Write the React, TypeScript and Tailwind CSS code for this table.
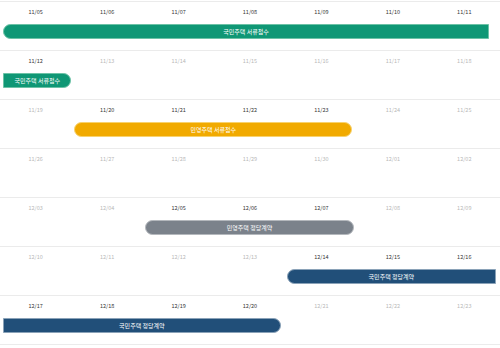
import React from 'react';

type Bar = {
  label: string;
  cls: string;
};

type Week = {
  days: string[];
  active: boolean[];
  bar?: Bar;
};

const weeks: Week[] = [
  {
    days: ['11/05', '11/06', '11/07', '11/08', '11/09', '11/10', '11/11'],
    active: [true, true, true, true, true, true, true],
    bar: {
      label: '국민주택 서류접수',
      cls: 'col-start-1 col-span-7 ml-[3px] mr-[11px] rounded-l-full bg-[#0f9775] border-[#6cc2a6]',
    },
  },
  {
    days: ['11/12', '11/13', '11/14', '11/15', '11/16', '11/17', '11/18'],
    active: [true, false, false, false, false, false, false],
    bar: {
      label: '국민주택 서류접수',
      cls: 'col-start-1 col-span-1 ml-[3px] rounded-r-full rounded-l-[2px] bg-[#0f9775] border-[#6cc2a6]',
    },
  },
  {
    days: ['11/19', '11/20', '11/21', '11/22', '11/23', '11/24', '11/25'],
    active: [false, true, true, true, true, false, false],
    bar: {
      label: '민영주택 서류접수',
      cls: 'col-start-2 col-span-4 ml-[3px] mr-[5px] rounded-full bg-[#f1aa00] border-[#f8d26e]',
    },
  },
  {
    days: ['11/26', '11/27', '11/28', '11/29', '11/30', '12/01', '12/02'],
    active: [false, false, false, false, false, false, false],
  },
  {
    days: ['12/03', '12/04', '12/05', '12/06', '12/07', '12/08', '12/09'],
    active: [false, false, true, true, true, false, false],
    bar: {
      label: '민영주택 정당계약',
      cls: 'col-start-3 col-span-3 ml-[2px] mr-[3px] rounded-full bg-[#7b828b] border-[#b4b8bd]',
    },
  },
  {
    days: ['12/10', '12/11', '12/12', '12/13', '12/14', '12/15', '12/16'],
    active: [false, false, false, false, true, true, true],
    bar: {
      label: '국민주택 정당계약',
      cls: 'col-start-5 col-span-3 ml-[1px] mr-[4px] rounded-l-full bg-[#214f79] border-[#8aa2b8]',
    },
  },
  {
    days: ['12/17', '12/18', '12/19', '12/20', '12/21', '12/22', '12/23'],
    active: [true, true, true, true, false, false, false],
    bar: {
      label: '국민주택 정당계약',
      cls: 'col-start-1 col-span-4 ml-[3px] mr-[5px] rounded-r-full bg-[#214f79] border-[#8aa2b8]',
    },
  },
];

export default function App() {
  return (
    <div
      className="w-[500px] h-[348px] bg-white pt-px overflow-hidden"
      style={{ fontFamily: '"Noto Sans CJK KR", "Noto Sans", sans-serif' }}
    >
      <div className="border-b border-[#ebebeb]">
        {weeks.map((week, i) => (
          <div key={i} className="h-[49px] border-t border-[#ebebeb]">
            <div className="grid grid-cols-7 h-[22px]">
              {week.days.map((d, j) => (
                <div
                  key={d}
                  className={
                    'flex items-center justify-center text-[5.5px] leading-none ' +
                    (week.active[j] ? 'text-[#333333]' : 'text-[#b8b8b8]')
                  }
                >
                  {d}
                </div>
              ))}
            </div>
            {week.bar && (
              <div className="grid grid-cols-7">
                <div
                  className={
                    'h-[15px] border flex items-center justify-center text-white text-[6px] leading-none whitespace-nowrap ' +
                    week.bar.cls
                  }
                >
                  {week.bar.label}
                </div>
              </div>
            )}
          </div>
        ))}
      </div>
    </div>
  );
}
